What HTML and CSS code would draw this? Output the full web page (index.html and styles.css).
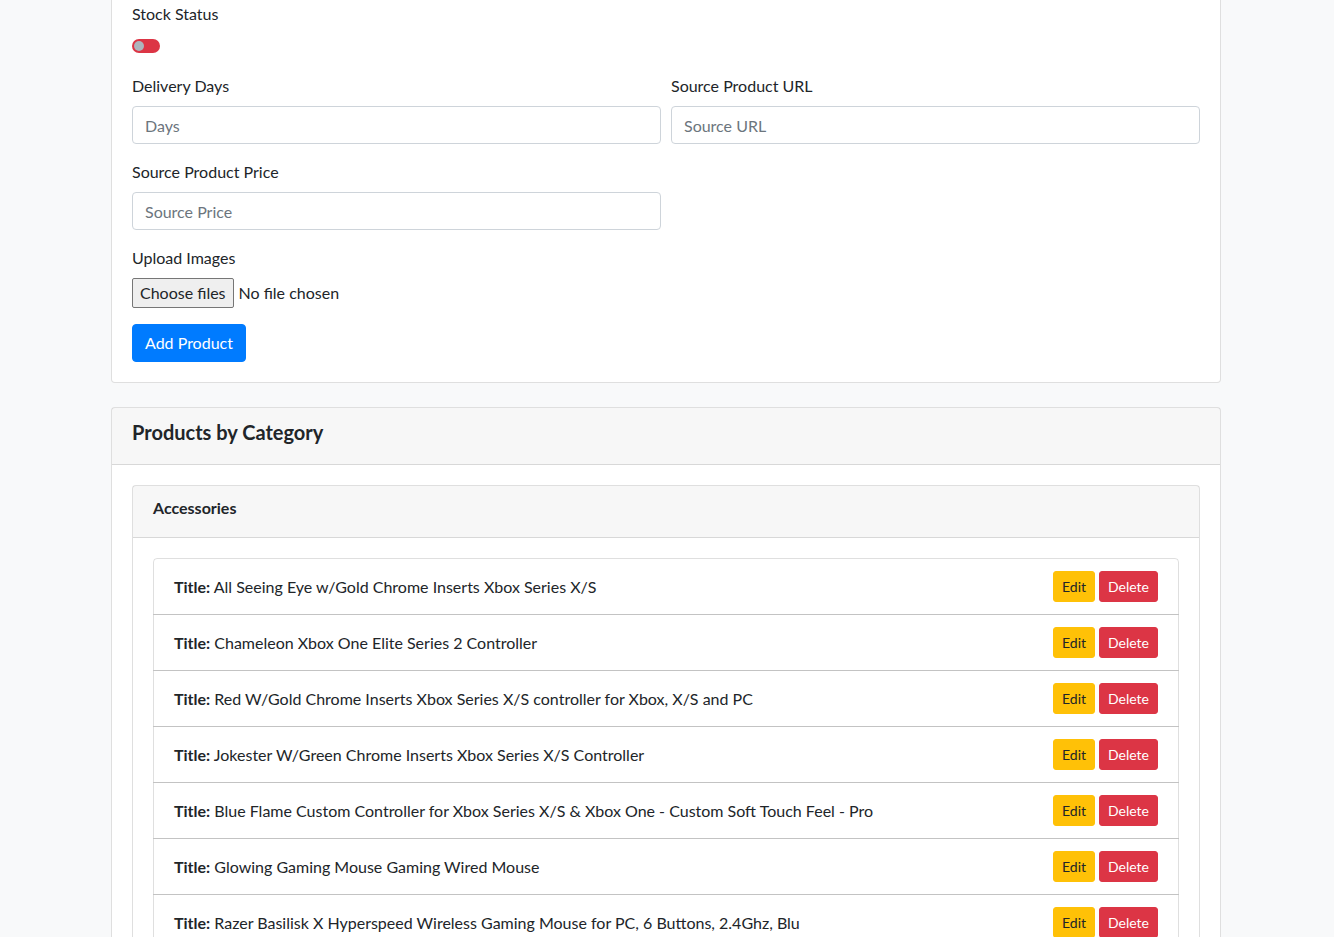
FILE: index.html
```html
<!DOCTYPE html>
<html lang="en">
<head>
<meta charset="utf-8">
<title>Products</title>
<link rel="stylesheet" href="styles.css">
</head>
<body>
<div class="container">
  <div class="card">
    <div class="card-body">
      <div class="form-group">
        <label class="label">Stock Status</label>
        <div class="switch-wrap">
          <span class="switch"><span class="knob"></span></span>
        </div>
      </div>
      <div class="form-row">
        <div class="form-group col">
          <label class="label">Delivery Days</label>
          <input class="form-control" type="text" placeholder="Days">
        </div>
        <div class="form-group col">
          <label class="label">Source Product URL</label>
          <input class="form-control" type="text" placeholder="Source URL">
        </div>
      </div>
      <div class="form-row">
        <div class="form-group col">
          <label class="label">Source Product Price</label>
          <input class="form-control" type="text" placeholder="Source Price">
        </div>
        <div class="col"></div>
      </div>
      <div class="form-group">
        <label class="label">Upload Images</label>
        <label class="file-field">
          <input class="file-hidden" type="file" multiple>
          <span class="file-btn">Choose files</span>
          <span class="file-name">No file chosen</span>
        </label>
      </div>
      <button class="btn btn-primary">Add Product</button>
    </div>
  </div>

  <div class="card card-products">
    <div class="card-header">
      <h5 class="h5">Products by Category</h5>
    </div>
    <div class="card-body">
      <div class="card">
        <div class="card-header">
          <h6 class="h6">Accessories</h6>
        </div>
        <div class="card-body">
          <ul class="list-group">
            <li class="list-item"><span><b>Title:</b> All Seeing Eye w/Gold Chrome Inserts Xbox Series X/S</span><span class="actions"><button class="btn-sm btn-warning">Edit</button><button class="btn-sm btn-danger">Delete</button></span></li>
            <li class="list-item"><span><b>Title:</b> Chameleon Xbox One Elite Series 2 Controller</span><span class="actions"><button class="btn-sm btn-warning">Edit</button><button class="btn-sm btn-danger">Delete</button></span></li>
            <li class="list-item"><span><b>Title:</b> Red W/Gold Chrome Inserts Xbox Series X/S controller for Xbox, X/S and PC</span><span class="actions"><button class="btn-sm btn-warning">Edit</button><button class="btn-sm btn-danger">Delete</button></span></li>
            <li class="list-item"><span><b>Title:</b> Jokester W/Green Chrome Inserts Xbox Series X/S Controller</span><span class="actions"><button class="btn-sm btn-warning">Edit</button><button class="btn-sm btn-danger">Delete</button></span></li>
            <li class="list-item"><span><b>Title:</b> Blue Flame Custom Controller for Xbox Series X/S &amp; Xbox One - Custom Soft Touch Feel - Pro</span><span class="actions"><button class="btn-sm btn-warning">Edit</button><button class="btn-sm btn-danger">Delete</button></span></li>
            <li class="list-item"><span><b>Title:</b> Glowing Gaming Mouse Gaming Wired Mouse</span><span class="actions"><button class="btn-sm btn-warning">Edit</button><button class="btn-sm btn-danger">Delete</button></span></li>
            <li class="list-item"><span><b>Title:</b> Razer Basilisk X Hyperspeed Wireless Gaming Mouse for PC, 6 Buttons, 2.4Ghz, Blu</span><span class="actions"><button class="btn-sm btn-warning">Edit</button><button class="btn-sm btn-danger">Delete</button></span></li>
          </ul>
        </div>
      </div>
    </div>
  </div>
</div>
</body>
</html>
```
FILE: styles.css
```css
* { box-sizing: border-box; }
html, body { margin: 0; padding: 0; }
body {
  background: #f8f9fa;
  font-family: "Lato", "Open Sans", sans-serif;
  font-size: 16px;
  line-height: 1.5;
  color: #212529;
  overflow: hidden;
}
.container {
  width: 1110px;
  margin: -19px 0 0 111px;
}
.card {
  background: #fff;
  border: 1px solid rgba(0,0,0,.125);
  border-radius: 4px;
  display: flex;
  flex-direction: column;
}
.card-products { margin-top: 24px; }
.card-body { padding: 20px; }
.card-header {
  padding: 12px 20px;
  background: rgba(0,0,0,.03);
  border-bottom: 1px solid rgba(0,0,0,.125);
}
.h5 { margin: 0 0 8px; font-size: 20px; font-weight: 700; line-height: 1.2; }
.h6 { margin: 0 0 8px; font-size: 16px; font-weight: 700; line-height: 1.2; }
.form-group { margin-bottom: 16px; }
.label { display: inline-block; margin-bottom: 8px; }
.switch-wrap { height: 24px; padding-top: 5px; }
.switch {
  display: block;
  width: 28px;
  height: 14px;
  border-radius: 7px;
  background: #dc3545;
  position: relative;
}
.knob {
  position: absolute;
  left: 2px;
  top: 2px;
  width: 10px;
  height: 10px;
  border-radius: 50%;
  background: #adb5bd;
}
.form-row { display: flex; margin: 0 -5px; }
.col { flex: 1 1 0; padding: 0 5px; }
.form-control {
  display: block;
  width: 100%;
  height: 38px;
  padding: 6px 12px;
  font: inherit;
  color: #495057;
  border: 1px solid #ced4da;
  border-radius: 4px;
  background: #fff;
}
.form-control::placeholder { color: #6c757d; }
.file-field {
  display: flex;
  align-items: center;
  gap: 5px;
  height: 30px;
}
.file-hidden { display: none; }
.file-btn {
  display: block;
  height: 30px;
  line-height: 28px;
  padding: 0 7px;
  background: #efefef;
  border: 1px solid #767676;
  border-radius: 2px;
  color: #212529;
}
.file-name { color: #212529; }
.btn {
  font: inherit;
  padding: 6px 12px;
  border: 1px solid transparent;
  border-radius: 4px;
  line-height: 1.5;
  cursor: pointer;
}
.btn-primary { background: #007bff; border-color: #007bff; color: #fff; }
.list-group { list-style: none; margin: 0; padding: 0; }
.list-item {
  display: flex;
  justify-content: space-between;
  align-items: center;
  padding: 12px 20px;
  border: 1px solid rgba(0,0,0,.125);
  margin-top: -1px;
}
.list-item:first-child { margin-top: 0; border-radius: 4px 4px 0 0; }
.actions { display: flex; gap: 4px; }
.btn-sm {
  font-family: inherit;
  font-size: 14px;
  line-height: 1.5;
  padding: 4px 8px;
  border: 1px solid transparent;
  border-radius: 3px;
}
.btn-warning { background: #ffc107; border-color: #ffc107; color: #212529; }
.btn-danger { background: #dc3545; border-color: #dc3545; color: #fff; }
```
